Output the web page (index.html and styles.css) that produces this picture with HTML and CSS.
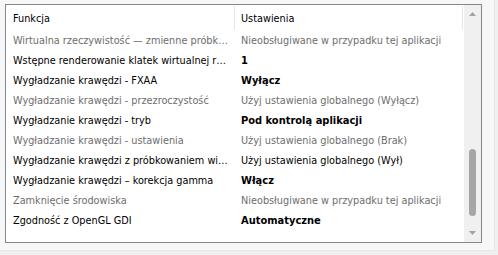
FILE: index.html
```html
<!DOCTYPE html>
<html lang="pl">
<head>
  <meta charset="UTF-8">
  <title>Ustawienia programu</title>
  <link rel="stylesheet" href="styles.css">
</head>
<body>

<div class="panel">
  <div class="lista">
    <div class="tabela">
      <div class="naglowek">
        <div class="kol1">Funkcja</div>
        <div class="kol2">Ustawienia</div>
      </div>
      <div class="wiersz szary"><div class="kol1">Wirtualna rzeczywistość — zmienne próbk…</div><div class="kol2">Nieobsługiwane w przypadku tej aplikacji</div></div>
      <div class="wiersz"><div class="kol1">Wstępne renderowanie klatek wirtualnej r…</div><div class="kol2 gruby">1</div></div>
      <div class="wiersz"><div class="kol1">Wygładzanie krawędzi - FXAA</div><div class="kol2 gruby">Wyłącz</div></div>
      <div class="wiersz szary"><div class="kol1">Wygładzanie krawędzi - przezroczystość</div><div class="kol2">Użyj ustawienia globalnego (Wyłącz)</div></div>
      <div class="wiersz"><div class="kol1">Wygładzanie krawędzi - tryb</div><div class="kol2 gruby">Pod kontrolą aplikacji</div></div>
      <div class="wiersz szary"><div class="kol1">Wygładzanie krawędzi - ustawienia</div><div class="kol2">Użyj ustawienia globalnego (Brak)</div></div>
      <div class="wiersz"><div class="kol1">Wygładzanie krawędzi z próbkowaniem wi…</div><div class="kol2">Użyj ustawienia globalnego (Wył)</div></div>
      <div class="wiersz"><div class="kol1">Wygładzanie krawędzi – korekcja gamma</div><div class="kol2 gruby">Włącz</div></div>
      <div class="wiersz szary"><div class="kol1">Zamknięcie środowiska</div><div class="kol2">Nieobsługiwane w przypadku tej aplikacji</div></div>
      <div class="wiersz"><div class="kol1">Zgodność z OpenGL GDI</div><div class="kol2 gruby">Automatyczne</div></div>
    </div>
    <div class="przewijanie">
      <svg class="strzalka" width="17" height="17" viewBox="0 0 17 17"><polygon points="5,11 12,11 8.5,7" fill="#a3a3a3"/></svg>
      <div class="tor"><div class="suwak"></div></div>
      <svg class="strzalka" width="17" height="17" viewBox="0 0 17 17"><polygon points="5,6 12,6 8.5,10" fill="#a3a3a3"/></svg>
    </div>
  </div>
</div>

</body>
</html>
```

FILE: styles.css
```css
body { margin: 0; background-color: #f0f0f0; font-family: "DejaVu Sans Condensed", "DejaVu Sans", sans-serif; font-size: 10.8px; color: #000; }
.panel { width: 489px; height: 246px; padding: 4px 0 0 5px; background-color: #f7f7f7; border-right: 1px solid #e6e6e6; border-bottom: 1px solid #e6e6e6; }
.lista { width: 475px; height: 237px; border: 1px solid #828790; background-color: #fff; display: flex; overflow: hidden; }
.tabela { flex: 1; min-width: 0; }
.naglowek { display: flex; height: 26px; align-items: stretch; }
.naglowek .kol1, .naglowek .kol2 { display: flex; align-items: center; margin: 1px 0 1px 0; border-right: 1px solid #e5e5e5; }
.kol1 { width: 221px; padding-left: 7px; flex-shrink: 0; white-space: nowrap; overflow: hidden; text-overflow: ellipsis; }
.kol2 { width: 221px; padding-left: 6px; white-space: nowrap; overflow: hidden; }
.wiersz { display: flex; height: 20px; line-height: 20px; }
.wiersz .kol1 { width: 219px; margin-right: 3px; }
.szary { color: #6d6d6d; }
.gruby { font-size: 11px; font-weight: bold; }
.przewijanie { width: 17px; background-color: #f0f0f0; display: flex; flex-direction: column; }
.strzalka { display: block; flex-shrink: 0; }
.tor { flex: 1; padding-top: 127px; }
.suwak { width: 7px; height: 67px; margin-left: 5px; border-radius: 4px; background-color: #a6a6a6; }
```
